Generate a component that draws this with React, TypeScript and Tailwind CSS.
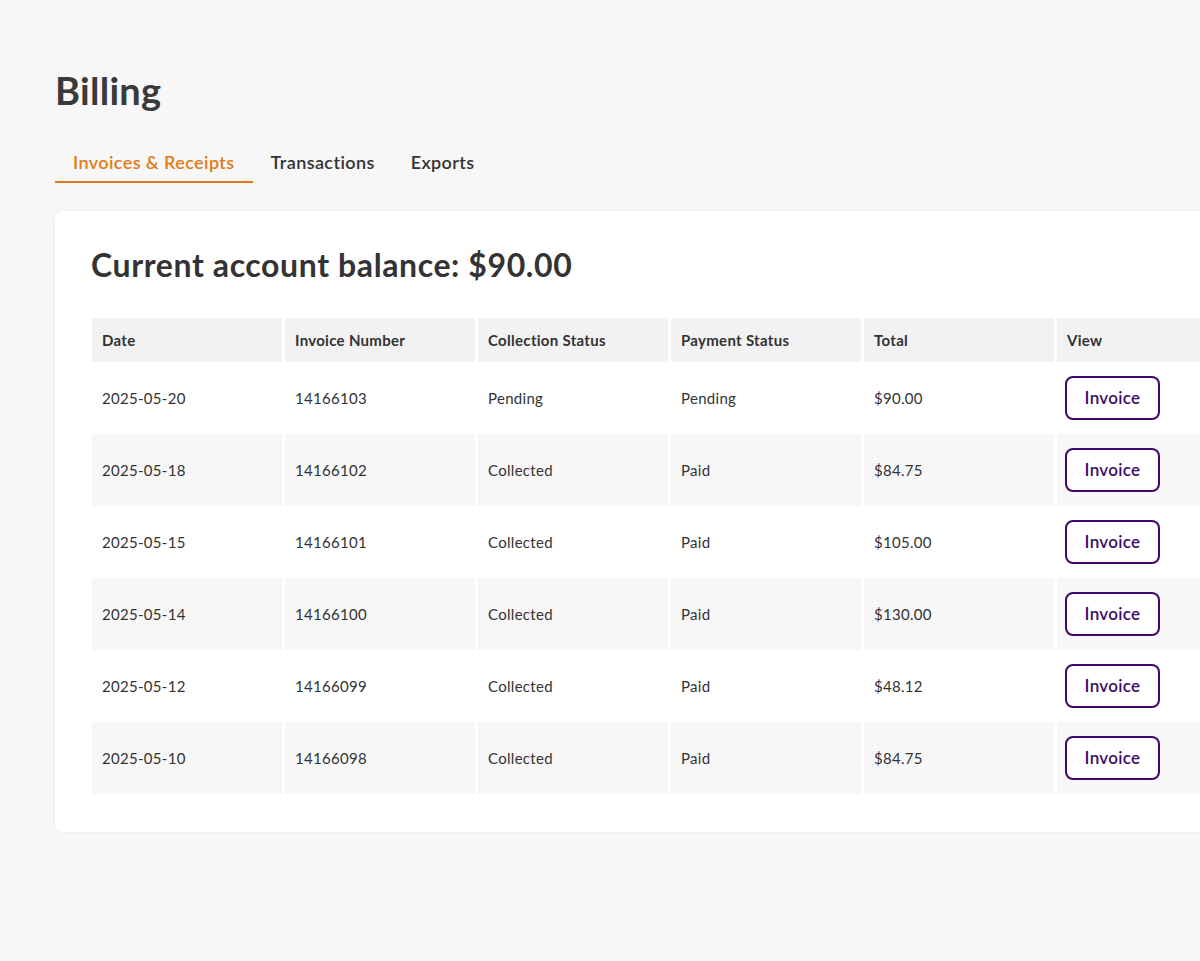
const rows = [
  ["2025-05-20", "14166103", "Pending", "Pending", "$90.00"],
  ["2025-05-18", "14166102", "Collected", "Paid", "$84.75"],
  ["2025-05-15", "14166101", "Collected", "Paid", "$105.00"],
  ["2025-05-14", "14166100", "Collected", "Paid", "$130.00"],
  ["2025-05-12", "14166099", "Collected", "Paid", "$48.12"],
  ["2025-05-10", "14166098", "Collected", "Paid", "$84.75"],
];

const headers = ["Date", "Invoice Number", "Collection Status", "Payment Status", "Total", "View"];

export default function App() {
  return (
    <div
      className="h-[961px] w-[1200px] overflow-hidden bg-[#f7f7f7] pl-[55px] pt-[68px] text-[#333]"
      style={{ fontFamily: "Lato, 'Open Sans', sans-serif" }}
    >
      <h1 className="text-[38px] font-bold leading-[44px] tracking-[0.3px] text-[#3a3a3a]">Billing</h1>
      <div className="mt-[37px] flex text-[18px] font-semibold tracking-[0.4px]">
        <div className="border-b-[2px] border-[#e07b16] px-[18px] pb-[5px] text-[#e07b16]">Invoices &amp; Receipts</div>
        <div className="px-[18px] pb-[5px] text-[#333]">Transactions</div>
        <div className="px-[18px] pb-[5px] text-[#333]">Exports</div>
      </div>
      <div className="mt-[28px] w-[1240px] rounded-lg bg-white pb-[38px] pl-[36px] pt-[35px] shadow-[0_0_4px_rgba(0,0,0,0.06)]">
        <h2 className="text-[32px] font-bold leading-[38px] tracking-[0.6px] text-[#333]">Current account balance: $90.00</h2>
        <table className="-ml-[2px] mt-[34px] border-separate border-spacing-x-[3px] border-spacing-y-0 text-[15px] tracking-[0.3px]">
          <thead>
            <tr>
              {headers.map((h) => (
                <th key={h} className="h-[44px] w-[190px] bg-[#f2f2f2] px-[10px] text-left font-bold text-[#333]">
                  {h}
                </th>
              ))}
            </tr>
          </thead>
          <tbody>
            {rows.map((r, i) => (
              <tr key={r[1]} className={i % 2 ? "bg-[#f7f7f7]" : "bg-white"}>
                {r.map((c, j) => (
                  <td key={j} className="h-[72px] px-[10px] text-[#333]">
                    {c}
                  </td>
                ))}
                <td className="h-[72px] px-[8px]">
                  <button className="h-[44px] w-[95px] rounded-lg border-2 border-[#3d0a6b] bg-white text-[17px] font-semibold tracking-[0.3px] text-[#3d0a6b]">
                    Invoice
                  </button>
                </td>
              </tr>
            ))}
          </tbody>
        </table>
      </div>
    </div>
  );
}
